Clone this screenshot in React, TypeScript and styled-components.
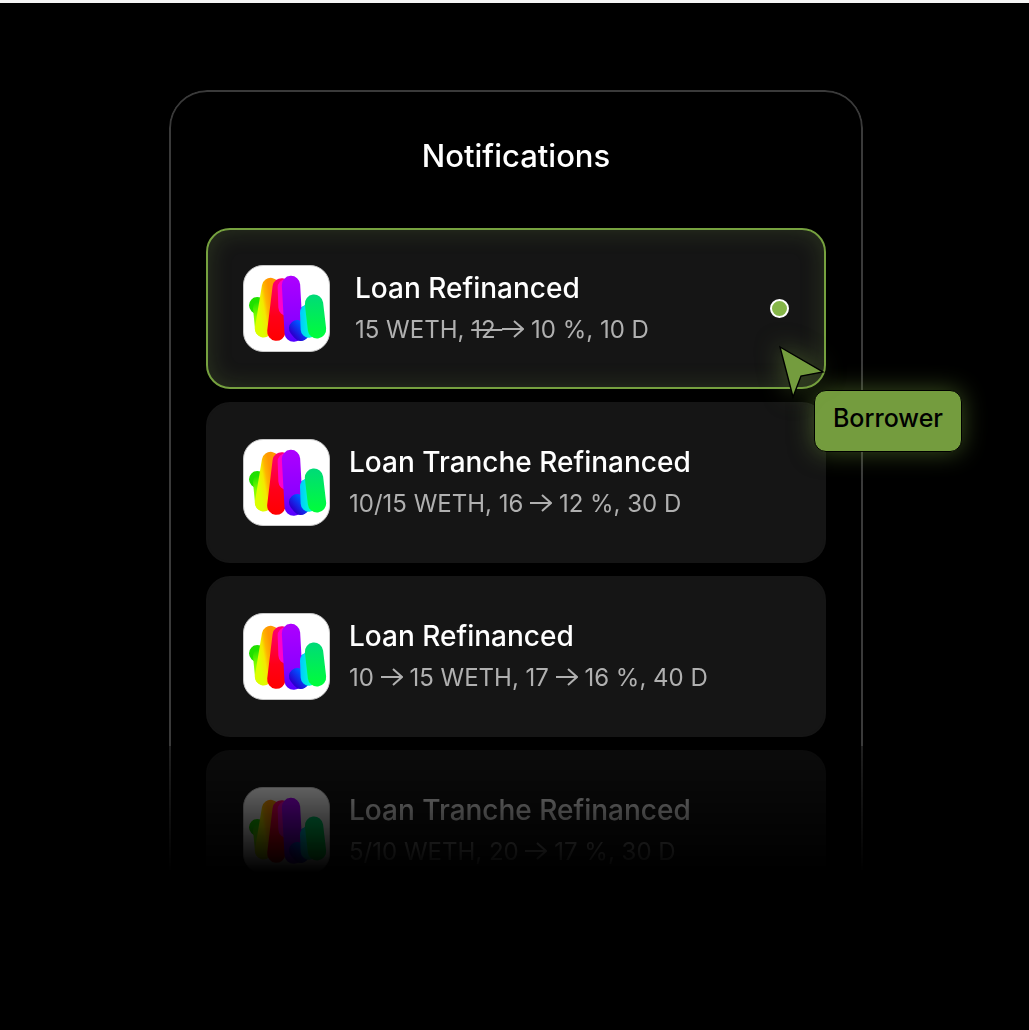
import React, { useId } from 'react';
import styled, { createGlobalStyle, css } from 'styled-components';

const GlobalStyle = createGlobalStyle`
  *, *::before, *::after { box-sizing: border-box; }
  body {
    margin: 0;
    background: #000;
    color: #fff;
    font-family: Inter, "Liberation Sans", sans-serif;
  }
`;

const Page = styled.main`
  min-height: 100vh;
  padding: 87px 166px 0 169px;
  border-top: 3px solid #f4f4f4;
  background: #000;
  overflow: hidden;
`;

const Stage = styled.div`
  position: relative;
`;

const Panel = styled.section`
  padding: 44px 35px 36px;
  border: 2px solid #3a3a3a;
  border-radius: 38px;
  background: #000;
  mask-image: linear-gradient(
    to bottom,
    #000 656px,
    rgba(0, 0, 0, 0.56) 656px,
    transparent 782px
  );
`;

const Heading = styled.h1`
  margin: 0 0 52px;
  font-size: 31px;
  line-height: 40px;
  font-weight: 500;
  text-align: center;
`;

const List = styled.ul`
  display: flex;
  flex-direction: column;
  gap: 13px;
  margin: 0;
  padding: 0;
  list-style: none;
`;

const Card = styled.li<{ $unread?: boolean }>`
  display: flex;
  align-items: center;
  gap: ${(p) => (p.$unread ? 25 : 19)}px;
  padding: 35px;
  border: 2px solid #151515;
  border-radius: 24px;
  background: #151515;
  ${(p) =>
    p.$unread &&
    css`
      border-color: #76a13f;
      box-shadow: inset 0 0 24px rgba(134, 182, 73, 0.2);
    `}
`;

const Logo = styled.svg`
  flex: none;
  width: 87px;
  height: 87px;
  border: 1px solid #c8c8c8;
  border-radius: 20px;
  background: #fff;
`;

const Body = styled.div`
  flex: 1;
  min-width: 0;
`;

const Title = styled.h2`
  margin: 0;
  font-size: 28px;
  line-height: 42px;
  font-weight: 500;
`;

const Detail = styled.p`
  margin: 0;
  color: #b0b0b0;
  font-size: 24px;
  line-height: 42px;
`;

const Arrow = styled.svg`
  width: 22px;
  height: 18px;
  fill: none;
  stroke: currentColor;
  stroke-width: 2;
`;

const UnreadDot = styled.span`
  flex: none;
  width: 19px;
  height: 19px;
  border: 2px solid #fff;
  border-radius: 50%;
  background: #86b649;
`;

const Pointer = styled.div`
  position: absolute;
  top: 256px;
  right: -99px;
  padding: 44px 0 0 35px;
`;

const PointerArrow = styled.svg`
  position: absolute;
  top: 0;
  left: 0;
  width: 46px;
  height: 53px;
  overflow: visible;
  filter: drop-shadow(0 0 12px rgba(116, 156, 62, 0.5));
`;

const PointerLabel = styled.div`
  padding: 10px 18px 16px;
  border: 1px solid #000;
  border-radius: 12px;
  background: #749c3e;
  box-shadow: 0 0 24px rgba(116, 156, 62, 0.5);
  color: #000;
  font-size: 25px;
  line-height: 34px;
  font-weight: 500;
`;

function To() {
  return (
    <Arrow viewBox="0 0 22 18" role="img" aria-label="to">
      <path d="M0 9H21M12 1L21 9L12 17" />
    </Arrow>
  );
}

function PoolLogo() {
  const id = useId();
  const ref = (name: string) => `url(#${id}${name})`;
  return (
    <Logo viewBox="0 0 255 255" aria-hidden="true">
      <defs>
        <linearGradient id={`${id}leaf`} gradientUnits="userSpaceOnUse" x1="30" y1="110" x2="60" y2="210">
          <stop offset="0" stopColor="#1fe000" />
          <stop offset="0.4" stopColor="#80ff00" />
          <stop offset="1" stopColor="#c8ff00" />
        </linearGradient>
        <linearGradient id={`${id}sun`} gradientUnits="userSpaceOnUse" x1="45" y1="135" x2="85" y2="128">
          <stop offset="0" stopColor="#dcff00" />
          <stop offset="0.4" stopColor="#f4e800" />
          <stop offset="0.65" stopColor="#ffb400" />
          <stop offset="1" stopColor="#ff9800" />
        </linearGradient>
        <linearGradient id={`${id}red`} gradientUnits="userSpaceOnUse" x1="0" y1="40" x2="0" y2="225">
          <stop offset="0" stopColor="#ff0070" />
          <stop offset="0.6" stopColor="#ff0018" />
          <stop offset="1" stopColor="#ff0000" />
        </linearGradient>
        <linearGradient id={`${id}violet`} gradientUnits="userSpaceOnUse" x1="0" y1="34" x2="0" y2="230">
          <stop offset="0" stopColor="#ac00ff" />
          <stop offset="0.65" stopColor="#8c00ff" />
          <stop offset="1" stopColor="#5000ff" />
        </linearGradient>
        <linearGradient id={`${id}blue`} gradientUnits="userSpaceOnUse" x1="138" y1="195" x2="190" y2="150">
          <stop offset="0" stopColor="#2800d0" />
          <stop offset="0.5" stopColor="#0050ff" />
          <stop offset="1" stopColor="#00a0ff" />
        </linearGradient>
        <linearGradient id={`${id}cyan`} gradientUnits="userSpaceOnUse" x1="168" y1="0" x2="200" y2="0">
          <stop offset="0" stopColor="#00c8ff" />
          <stop offset="1" stopColor="#00ffd0" />
        </linearGradient>
        <linearGradient id={`${id}green`} gradientUnits="userSpaceOnUse" x1="0" y1="85" x2="0" y2="220">
          <stop offset="0" stopColor="#00da78" />
          <stop offset="1" stopColor="#00ff38" />
        </linearGradient>
      </defs>
      <g fill="none" strokeLinecap="round">
        <path d="M40 118L41 119" stroke="#1fe000" strokeWidth="50" />
        <path d="M52 126L58 188" stroke={ref('leaf')} strokeWidth="50" />
        <path d="M80 62L59 188" stroke={ref('sun')} strokeWidth="53" />
        <path d="M113 64L97 197" stroke={ref('red')} strokeWidth="55" />
        <path d="M126 64L128 124" stroke="#ff00c8" strokeWidth="50" />
        <path d="M188 144L170 199" stroke={ref('blue')} strokeWidth="52" />
        <path d="M141 57L149 200" stroke={ref('violet')} strokeWidth="55" />
        <path d="M160 187L170 199" stroke={ref('blue')} strokeWidth="50" />
        <path d="M193 140L195 190" stroke={ref('cyan')} strokeWidth="50" />
        <path d="M210 113L219 190" stroke={ref('green')} strokeWidth="55" />
      </g>
    </Logo>
  );
}

const notifications: { title: string; detail: React.ReactNode; unread?: boolean }[] = [
  { title: 'Loan Refinanced', detail: <>15 WETH, <s>12 </s><To /> 10 %, 10 D</>, unread: true },
  { title: 'Loan Tranche Refinanced', detail: <>10/15 WETH, 16 <To /> 12 %, 30 D</> },
  { title: 'Loan Refinanced', detail: <>10 <To /> 15 WETH, 17 <To /> 16 %, 40 D</> },
  { title: 'Loan Tranche Refinanced', detail: <>5/10 WETH, 20 <To /> 17 %, 30 D</> },
];

export default function App() {
  return (
    <>
      <GlobalStyle />
      <Page>
        <Stage>
          <Panel>
            <Heading>Notifications</Heading>
            <List>
              {notifications.map((item, index) => (
                <Card key={index} $unread={item.unread}>
                  <PoolLogo />
                  <Body>
                    <Title>{item.title}</Title>
                    <Detail>{item.detail}</Detail>
                  </Body>
                  {item.unread && <UnreadDot role="img" aria-label="Unread" />}
                </Card>
              ))}
            </List>
          </Panel>
          <Pointer>
            <PointerArrow viewBox="0 0 46 53" aria-hidden="true">
              <path d="M1 1L44 26L22 30L14 51Z" fill="#749c3e" stroke="#000" strokeWidth="1.4" />
            </PointerArrow>
            <PointerLabel>Borrower</PointerLabel>
          </Pointer>
        </Stage>
      </Page>
    </>
  );
}
